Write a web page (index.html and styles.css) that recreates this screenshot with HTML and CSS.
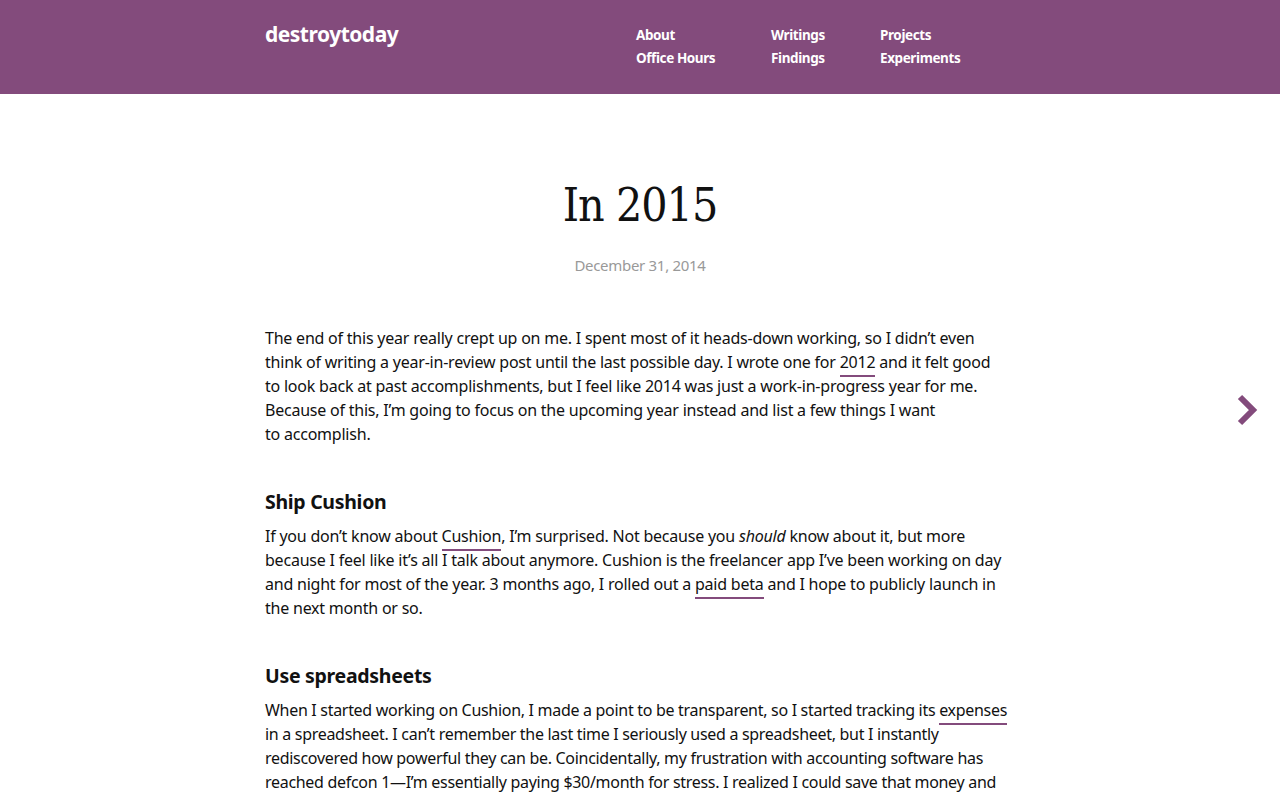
FILE: index.html
```html
<!DOCTYPE html>
<html>
<head>
<meta charset="utf-8">
<link rel="stylesheet" href="styles.css">
</head>
<body>
<header class="site-header">
  <div class="header-inner">
    <a class="logo" href="#">destroytoday</a>
    <nav class="nav">
      <ul class="nav-col nav-col-1">
        <li><a href="#">About</a></li>
        <li><a href="#">Office Hours</a></li>
      </ul>
      <ul class="nav-col nav-col-2">
        <li><a href="#">Writings</a></li>
        <li><a href="#">Findings</a></li>
      </ul>
      <ul class="nav-col nav-col-3">
        <li><a href="#">Projects</a></li>
        <li><a href="#">Experiments</a></li>
      </ul>
    </nav>
  </div>
</header>
<main class="post">
  <h1 class="post-title">In 2015</h1>
  <p class="post-date">December 31, 2014</p>
  <div class="post-body">
    <p>The end of this year really crept up on me. I spent most of it heads-down working, so I didn’t even think of writing a year-in-review post until the last possible day. I wrote one for <a href="#">2012</a> and it felt good to&nbsp;look back at past accomplishments, but I feel like 2014 was just a work-in-progress year for me. Because of this, I’m going to focus on the upcoming year instead and list a few things I want to&nbsp;accomplish.</p>
    <h2>Ship Cushion</h2>
    <p>If you don’t know about <a href="#">Cushion</a>, I’m surprised. Not because you <em>should</em> know about it, but more because I feel like it’s all I talk about anymore. Cushion is the freelancer app I’ve been working on day and night for most of the year. 3 months ago, I rolled out a <a href="#">paid beta</a> and I hope to publicly launch in the next month or so.</p>
    <h2>Use spreadsheets</h2>
    <p class="tight">When I started working on Cushion, I made a point to be transparent, so I started tracking its <a href="#">expenses</a> in a spreadsheet. I can’t remember the last time I seriously used a spreadsheet, but I instantly rediscovered how powerful they can be. Coincidentally, my frustration with accounting software has reached defcon 1—I’m essentially paying $30/month for stress. I realized I could save that money and build my own spreadsheet to track my income and expenses, with formulas that do exactly what I need them to.</p>
  </div>
</main>
<a class="next" href="#" aria-label="Next post">
  <svg width="24" height="34" viewBox="0 0 24 34"><path d="M4 4 L17 17 L4 30" fill="none" stroke="#834b7c" stroke-width="6" stroke-linejoin="miter"/></svg>
</a>
</body>
</html>
```

FILE: styles.css
```css
html, body {
  margin: 0;
  padding: 0;
  background: #fff;
}
body {
  font-family: "Noto Sans", "Open Sans", sans-serif;
  color: #111;
  overflow: hidden;
}
a { color: inherit; text-decoration: none; }

.site-header {
  background: #834b7c;
  height: 94px;
}
.header-inner {
  width: 750px;
  margin: 0 auto;
  display: flex;
  justify-content: space-between;
  padding-top: 20px;
}
.logo {
  color: #fff;
  font-weight: 700;
  font-size: 21px;
  line-height: 28px;
  letter-spacing: -0.5px;
}
.nav {
  display: flex;
  margin-right: 56px;
}
.nav-col {
  list-style: none;
  margin: 4px 0 0;
  padding: 0;
}
.nav-col-1 { width: 135px; }
.nav-col-2 { width: 109px; }
.nav-col-3 { width: 79px; }
.nav-col li {
  font-size: 13.5px;
  font-weight: 700;
  line-height: 23px;
  color: #fff;
  letter-spacing: -0.4px;
  white-space: nowrap;
}

.post {
  width: 750px;
  margin: 0 auto;
}
.post-title {
  font-family: "DejaVu Serif", "Liberation Serif", serif;
  font-stretch: condensed;
  font-weight: 400;
  font-size: 46px;
  line-height: 56px;
  letter-spacing: -1px;
  text-align: center;
  margin: 83px 0 0;
  color: #111;
}
.post-date {
  text-align: center;
  color: #999;
  font-size: 15px;
  letter-spacing: -0.3px;
  margin: 20px 0 0;
  line-height: 24px;
}
.post-body {
  margin-top: 49px;
}
.post-body p {
  font-size: 16px;
  line-height: 24px;
  letter-spacing: -0.22px;
  margin: 0 0 44px;
}
.post-body p.tight {
  letter-spacing: -0.3px;
}
.post-body h2 {
  font-size: 19.5px;
  font-weight: 700;
  line-height: 24px;
  letter-spacing: -0.3px;
  margin: 0 0 10px;
}
.post-body a {
  border-bottom: 2px solid #834b7c;
  padding-bottom: 2px;
}
.next {
  position: absolute;
  left: 1236px;
  top: 393px;
}
```
